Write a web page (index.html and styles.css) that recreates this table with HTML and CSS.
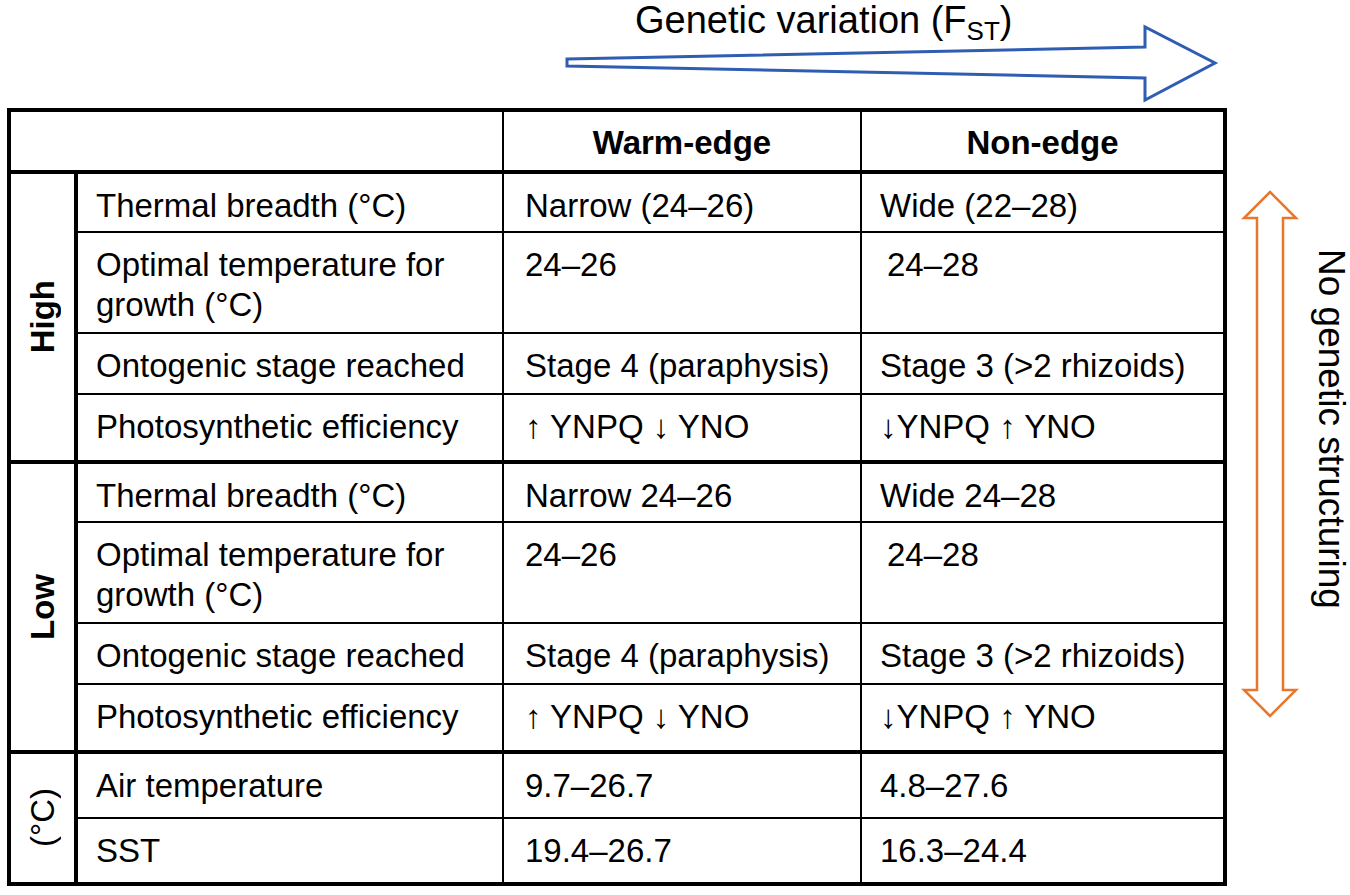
FILE: index.html
```html
<!DOCTYPE html>
<html lang="en">
<head>
  <meta charset="UTF-8" />
  <meta name="viewport" content="width=device-width, initial-scale=1.0"/>
  <title>Thermal performance: warm-edge vs non-edge</title>
  <link rel="stylesheet" href="styles.css">
</head>
<body>
  <div class="top">
    <svg class="fst-arrow" width="1350" height="108" viewBox="0 0 1350 108">
      <polygon points="567,59 1145,47 1145,27 1215,63 1145,100 1145,78 567,66" />
    </svg>
    <div class="title">Genetic variation (F<sub>ST</sub>)</div>
  </div>

  <div class="main">
    <div class="table">
      <div class="head">
        <div class="cell"></div>
        <div class="cell">Warm-edge</div>
        <div class="cell">Non-edge</div>
      </div>

      <!-- High -->
      <div class="group">
        <div class="grp-label"><span>High</span></div>
        <div class="rows">
          <div class="row thermal">
            <div class="cell">Thermal breadth (°C)</div>
            <div class="cell">Narrow (24–26)</div>
            <div class="cell">Wide (22–28)</div>
          </div>
          <div class="row optimal">
            <div class="cell">Optimal temperature for<br>growth (°C)</div>
            <div class="cell">24–26</div>
            <div class="cell ind">24–28</div>
          </div>
          <div class="row onto">
            <div class="cell">Ontogenic stage reached</div>
            <div class="cell">Stage 4 (paraphysis)</div>
            <div class="cell">Stage 3 (&gt;2 rhizoids)</div>
          </div>
          <div class="row photo">
            <div class="cell">Photosynthetic efficiency</div>
            <div class="cell">↑ YNPQ ↓ YNO</div>
            <div class="cell">↓YNPQ ↑ YNO</div>
          </div>
        </div>
      </div>

      <!-- Low -->
      <div class="group">
        <div class="grp-label"><span>Low</span></div>
        <div class="rows">
          <div class="row thermal">
            <div class="cell">Thermal breadth (°C)</div>
            <div class="cell">Narrow 24–26</div>
            <div class="cell">Wide 24–28</div>
          </div>
          <div class="row optimal">
            <div class="cell">Optimal temperature for<br>growth (°C)</div>
            <div class="cell">24–26</div>
            <div class="cell ind">24–28</div>
          </div>
          <div class="row onto">
            <div class="cell">Ontogenic stage reached</div>
            <div class="cell">Stage 4 (paraphysis)</div>
            <div class="cell">Stage 3 (&gt;2 rhizoids)</div>
          </div>
          <div class="row photo">
            <div class="cell">Photosynthetic efficiency</div>
            <div class="cell">↑ YNPQ ↓ YNO</div>
            <div class="cell">↓YNPQ ↑ YNO</div>
          </div>
        </div>
      </div>

      <!-- Temperature -->
      <div class="group">
        <div class="grp-label unit"><span>(°C)</span></div>
        <div class="rows">
          <div class="row air">
            <div class="cell">Air temperature</div>
            <div class="cell">9.7–26.7</div>
            <div class="cell">4.8–27.6</div>
          </div>
          <div class="row sst">
            <div class="cell">SST</div>
            <div class="cell">19.4–26.7</div>
            <div class="cell">16.3–24.4</div>
          </div>
        </div>
      </div>
    </div>

    <div class="struct">
      <svg class="struct-arrow" width="64" height="530" viewBox="0 0 64 530">
        <polygon points="32,2 58,28 45,28 45,500 58,500 32,526 6,500 19,500 19,28 6,28" />
      </svg>
      <div class="struct-text">No genetic structuring</div>
    </div>
  </div>
</body>
</html>
```

FILE: styles.css
```css
body {
  margin: 0;
  font-family: "Liberation Sans", Arial, sans-serif;
  color: #000;
  background: #fff;
  overflow: hidden;
}
.top {
  display: grid;
  height: 108px;
}
.top > * {
  grid-area: 1 / 1;
}
.fst-arrow polygon {
  fill: #fff;
  stroke: #2f5db2;
  stroke-width: 3;
}
.title {
  margin-left: 635px;
  font-size: 38px;
  line-height: 40px;
}
.title sub {
  font-size: 26px;
  line-height: 0;
  vertical-align: -7px;
}
.main {
  display: flex;
  align-items: flex-start;
  padding-left: 7px;
}
.table {
  flex: none;
  width: 1220px;
  box-sizing: border-box;
  border: 4px solid #000;
  font-size: 33px;
  line-height: 40px;
}
.head, .row {
  display: grid;
  box-sizing: border-box;
}
.head {
  grid-template-columns: 493px 358px 361px;
  height: 62px;
  border-bottom: 4px solid #000;
  font-weight: bold;
  text-align: center;
}
.row {
  grid-template-columns: 426px 358px 361px;
  border-bottom: 2px solid #000;
}
.row:last-child {
  border-bottom: none;
}
.cell {
  box-sizing: border-box;
  padding: 12px 0 0 18px;
  border-right: 2px solid #000;
  white-space: nowrap;
}
.cell:nth-child(2) {
  padding-left: 21px;
}
.cell:last-child {
  border-right: none;
}
.cell.ind {
  padding-left: 25px;
}
.head .cell {
  padding: 11px 0 0 0;
}
.thermal { height: 59px; }
.optimal { height: 101px; }
.onto { height: 61px; }
.photo { height: 65px; }
.air { height: 65px; }
.sst { height: 63px; }
.group {
  display: flex;
  border-bottom: 4px solid #000;
}
.group:last-child {
  border-bottom: none;
}
.grp-label {
  flex: none;
  width: 67px;
  box-sizing: border-box;
  border-right: 4px solid #000;
  display: flex;
  align-items: center;
  justify-content: center;
  font-weight: bold;
}
.grp-label span {
  writing-mode: vertical-rl;
  transform: rotate(180deg);
}
.grp-label.unit {
  font-weight: normal;
}
.struct {
  display: flex;
  align-items: flex-start;
  margin-top: 82px;
}
.struct-arrow {
  margin-left: 11px;
}
.struct-arrow polygon {
  fill: #fff;
  stroke: #e8772c;
  stroke-width: 2.5;
}
.struct-text {
  writing-mode: vertical-rl;
  font-size: 37px;
  line-height: 36px;
  margin-left: 11px;
  margin-top: 59px;
  white-space: nowrap;
}
```
